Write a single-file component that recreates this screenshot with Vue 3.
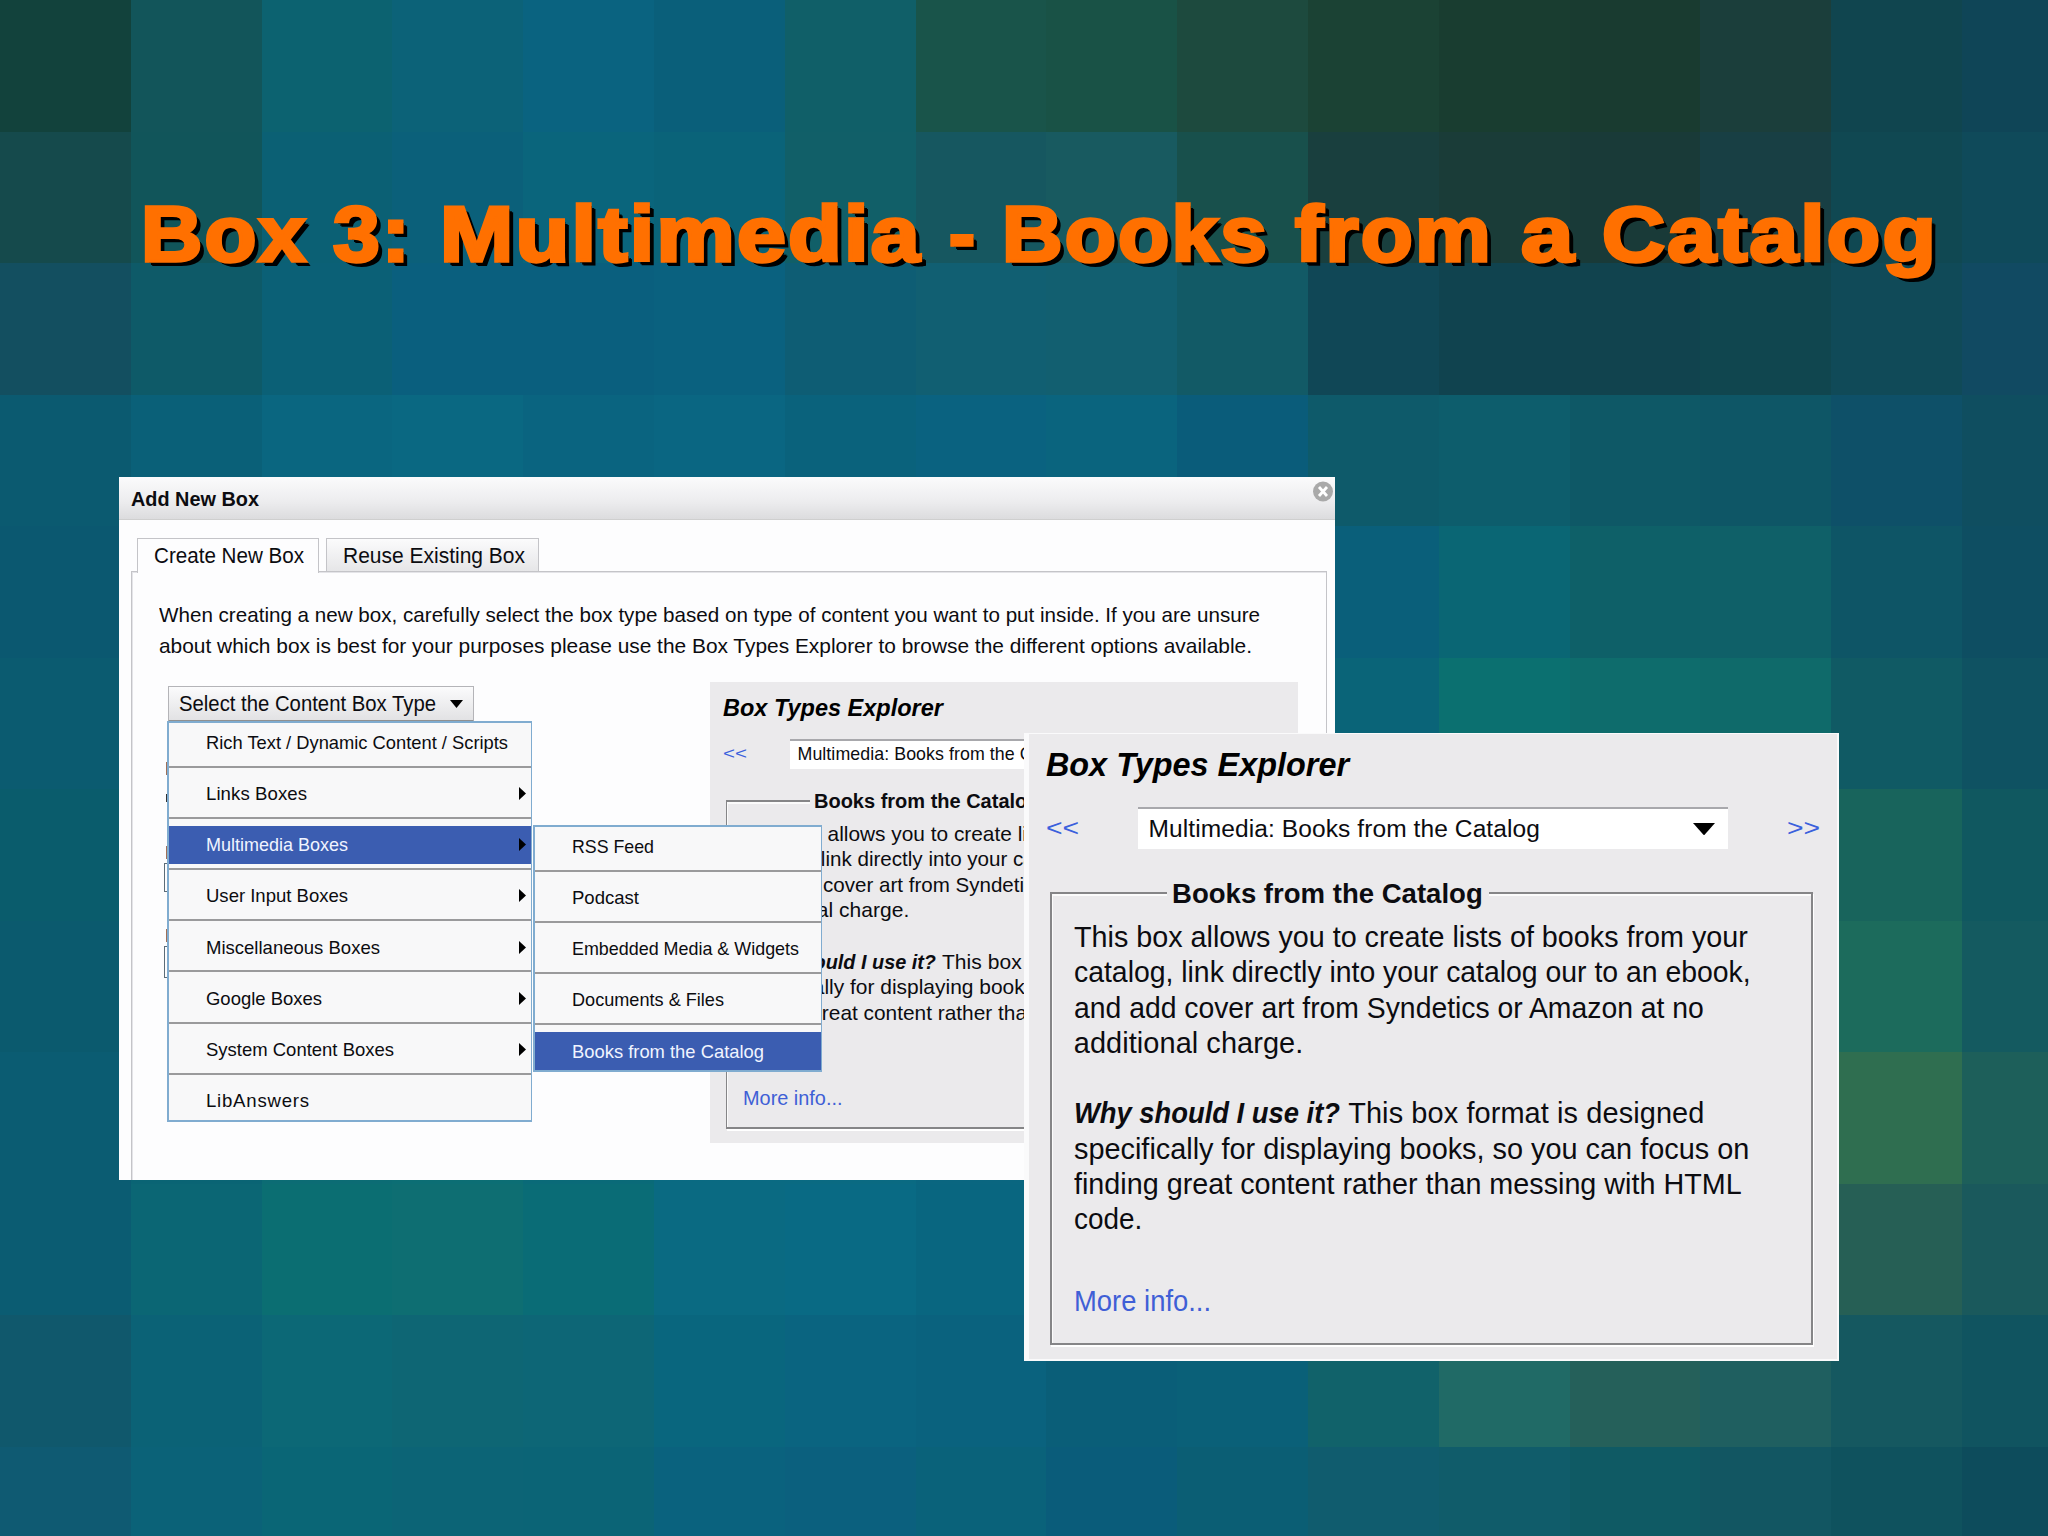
<script setup>
// Background mosaic, row by row
const mosaic = [
  '12423c 12555a 0c6270 0c6278 0a6380 0a5f7a 105f68 19544a 195246 1d4a3e 1b4234 193d30 193b30 1b3e3b 10454f 0f4557',
  '154a4c 11555a 0b6074 0b607a 0a657c 0a6379 115f68 165760 185a60 18504c 193f3e 1a3c38 193a38 183f44 104852 0f4a5a',
  '134f60 0e5a68 0b6076 0a5f7e 0a5f7e 0a617f 0e5d74 115f72 125f70 125a66 104756 10434f 11434e 10464f 104a58 114a62',
  '0b5a70 0a6078 0a6680 0a6882 0a6480 0a6682 0a627c 0a6280 0a647e 0a5c7a 0e5a6a 0d5d6c 0e5866 0e5666 0e5068 0f4e60',
  '0b5870 0a6078 0a6680 0a6680 0a6680 0a6680 0a6680 0a6680 0a6680 0a607c 0a5f7a 0a6674 0e6068 0f6068 0e5566 0e4e62',
  '0b5b70 0a6078 0a6680 0a6680 0a6680 0a6680 0a6680 0a6680 0a6680 0a6680 0a6478 0b7070 0e6c6c 0f6a6a 105a64 0f5262',
  '0a5c6c 0a6078 0a6680 0a6680 0a6680 0a6680 0a6680 0a6680 0a6680 0a6680 0a6680 0b7070 0e6c6c 146a66 18645c 105860',
  '0b5a6e 0a6078 0a6680 0a6680 0a6680 0a6680 0a6680 0a6680 0a6680 0a6680 0a6680 0b7070 0e6c6c 186a62 1c6b5c 145a60',
  '0b5c72 0a6474 0c6c74 0c6e74 0a6a78 0a6a82 0a6a82 0a6680 0a6680 0a6680 0a6680 0b7070 0e6c6c 286c56 2f6e50 1d5f5a',
  '0b5c72 0b6674 0b6e72 0e6e72 0a6c76 0a6a82 096a84 096680 096680 0a6680 0a6680 0b7070 0e6c6c 246457 265f55 1a595c',
  '10586c 0b6276 0c6876 0e6674 0d6676 09667e 0a6480 0a627e 0a5e78 0a6078 11626a 206a66 25605a 1f5f60 155860 105460',
  '0f5a72 0b6278 0a6676 0c6476 0b6476 0a627e 0b607e 0a627a 0a5c7a 0b5e74 105c6e 105c6a 0f5a64 125662 0f525e 0d4c5c',
].flatMap((row) => row.split(' ').map((c) => '#' + c))

const title = [
  ['Box', 167, 0],
  ['3:', 79, 25],
  ['Multimedia', 482, 28],
  ['-', 28, 27],
  ['Books', 267, 25],
  ['from', 198, 26],
  ['a', 55, 28],
  ['Catalog', 336, 26],
]

const menu = [
  { label: 'Rich Text / Dynamic Content / Scripts', w: 302 },
  { label: 'Links Boxes', w: 101, sub: true },
  { label: 'Multimedia Boxes', w: 142, sub: true, on: true },
  { label: 'User Input Boxes', w: 142, sub: true },
  { label: 'Miscellaneous Boxes', w: 174, sub: true },
  { label: 'Google Boxes', w: 116, sub: true },
  { label: 'System Content Boxes', w: 188, sub: true },
  { label: 'LibAnswers', w: 103 },
]

const submenu = [
  { label: 'RSS Feed', w: 82 },
  { label: 'Podcast', w: 67 },
  { label: 'Embedded Media & Widgets', w: 227 },
  { label: 'Documents & Files', w: 152 },
  { label: 'Books from the Catalog', w: 192, on: true },
]

const explorers = [
  { size: 'small', k: 1 },
  { size: 'large', k: 1.378 },
]

const intro = [
  ['When creating a new box, carefully select the box type based on type of content you want to put inside. If you are unsure', 1101],
  ['about which box is best for your purposes please use the Box Types Explorer to browse the different options available.', 1093],
]

const about = [
  ['This box allows you to create lists of books from your', 489],
  ['catalog, link directly into your catalog our to an ebook,', 491],
  ['and add cover art from Syndetics or Amazon at no', 457],
  ['additional charge.', 166.5],
]

const why = [
  ['specifically for displaying books, so you can focus on', 490],
  ['finding great content rather than messing with HTML', 484.5],
  ['code.', 49.5],
]

// Fits the text to the given width: tracks it out, or scales it when it
// must be narrower or carries the stretch modifier
const vFit = {
  mounted(el, { value, modifiers }) {
    const chars = el.textContent.length
    const natural = el.getBoundingClientRect().width
    if (modifiers.stretch || value < natural) {
      el.style.transform = `scaleX(${value / natural})`
      el.style.marginRight = value - natural + 'px'
    } else {
      const spacing = (value - natural) / (chars - 1)
      el.style.letterSpacing = spacing + 'px'
      el.style.marginRight = -spacing + 'px'
    }
  },
}
</script>

<template>
  <main class="slide">
    <div class="mosaic">
      <i v-for="(c, n) in mosaic" :key="n" :style="{ background: c }"></i>
    </div>

    <h1 class="title">
      <span v-for="([word, w, gap], n) in title" :key="n" class="word" :style="{ width: w + 'px', marginLeft: gap + 'px' }"><span v-fit.stretch="w" class="fit">{{ word }}</span></span>
    </h1>

    <section class="dialog">
      <header class="bar">
        <b v-fit="128" class="fit">Add New Box</b>
        <svg class="close" viewBox="0 0 20 20">
          <circle cx="10" cy="10" r="10" fill="#a9a9a9" />
          <path d="M6 5.5 L14 14.5 M14 5.5 L6 14.5" stroke="#fff" stroke-width="2.8" />
        </svg>
      </header>
      <nav class="tabs">
        <div class="tab active"><span v-fit="150" class="fit">Create New Box</span></div>
        <div class="tab"><span v-fit="182" class="fit">Reuse Existing Box</span></div>
      </nav>
      <div class="panel">
        <p class="intro">
          <span v-for="[line, w] in intro" :key="line" class="row"><span v-fit="w" class="fit">{{ line }}</span></span>
        </p>
        <div class="chooser">
          <button class="select-type">
            <span v-fit="257" class="fit">Select the Content Box Type</span>
            <svg width="13" height="8" viewBox="0 0 13 8"><path d="M0 0H13L6.5 8Z" /></svg>
          </button>
          <div class="hidden-form">
            <i class="mark m1"></i><i class="mark m2"></i><i class="mark m3"></i>
            <i class="field f1"></i><i class="mark m4"></i><i class="field f2"></i>
          </div>
          <ul class="menu main-menu">
            <li v-for="item in menu" :key="item.label">
              <div class="band" :class="{ on: item.on }">
                <span v-fit="item.w" class="fit">{{ item.label }}</span>
                <svg v-if="item.sub" width="7" height="13" viewBox="0 0 7 13"><path d="M0 0L7 6.5L0 13Z" /></svg>
              </div>
            </li>
          </ul>
          <ul class="menu sub-menu">
            <li v-for="item in submenu" :key="item.label">
              <div class="band" :class="{ on: item.on }">
                <span v-fit="item.w" class="fit">{{ item.label }}</span>
              </div>
            </li>
          </ul>
        </div>
      </div>
    </section>

    <section v-for="{ size, k } in explorers" :key="size" class="explorer" :class="size">
      <div class="inner">
        <h2><span v-fit="220 * k" class="fit">Box Types Explorer</span></h2>
        <div class="picker">
          <a class="step"><span v-fit.stretch="24 * k" class="fit">&lt;&lt;</span></a>
          <div class="combo">
            <span v-fit="284 * k" class="fit">Multimedia: Books from the Catalog</span>
            <svg viewBox="0 0 16 9"><path d="M0 0H16L8 9Z" /></svg>
          </div>
          <a class="step"><span v-fit.stretch="24 * k" class="fit">&gt;&gt;</span></a>
        </div>
        <fieldset>
          <legend><span v-fit="225.5 * k" class="fit">Books from the Catalog</span></legend>
          <div class="copy">
            <span v-for="[line, w] in about" :key="line" class="row"><span v-fit="w * k" class="fit">{{ line }}</span></span>
            <span class="row">&nbsp;</span>
            <span class="row why"><b v-fit="193 * k" class="fit">Why should I use it?</b><span v-fit="258.5 * k" class="fit">This box format is designed</span></span>
            <span v-for="[line, w] in why" :key="line" class="row"><span v-fit="w * k" class="fit">{{ line }}</span></span>
          </div>
          <a class="more"><span v-fit="99.5 * k" class="fit">More info...</span></a>
        </fieldset>
      </div>
    </section>
  </main>
</template>

<style>
body { background: #0a6680; }
</style>

<style scoped>
.slide {
  position: relative;
  width: 2048px;
  height: 1536px;
  overflow: hidden;
  font-family: "Liberation Sans", Arial, sans-serif;
  color: #0c0c10;
}
.fit { display: inline-block; white-space: pre; transform-origin: 0 50%; }
.row { display: block; white-space: nowrap; }

.mosaic {
  position: absolute;
  inset: 0;
  display: grid;
  grid-template-columns: repeat(16, 130.8px);
  grid-template-rows: repeat(12, 131.5px);
}

.title {
  position: absolute;
  left: 141px;
  top: 184px;
  margin: 0;
  display: flex;
  font: 700 78px/100px "Liberation Sans", Arial, sans-serif;
  letter-spacing: 2px;
  color: #ff7000;
  -webkit-text-stroke: 3.4px #ff7000;
  text-shadow: 2px 2px 0 #000, 4px 4px 0 #000, 5px 5px 0 #000;
}
.word { flex: none; white-space: nowrap; }

.dialog {
  position: absolute;
  left: 119px;
  top: 477px;
  width: 1216px;
  height: 703px;
  background: #fdfdfe;
}
.bar {
  display: flex;
  justify-content: space-between;
  height: 43px;
  box-sizing: border-box;
  border-bottom: 1px solid #cfcfcf;
  padding: 0 2px 0 12px;
  background: linear-gradient(#fbfbfc, #ececee 60%, #dcdcde);
  font-size: 21px;
  line-height: 43px;
}
.close { width: 20px; height: 21px; margin-top: 4px; }
.tabs {
  display: flex;
  gap: 7px;
  margin: 18px 0 0 18px;
  height: 33px;
}
.tab {
  box-sizing: border-box;
  height: 33px;
  border: 1px solid #c4c4c8;
  border-bottom: 0;
  padding: 0 14px 0 16px;
  width: 213px;
  font-size: 21.3px;
  line-height: 34px;
  background: linear-gradient(#fbfbfc, #e6e6e8);
}
.tab.active {
  position: relative;
  z-index: 1;
  width: 182px;
  height: 35px;
  background: #fdfdfe;
}
.panel {
  box-sizing: border-box;
  width: 1196px;
  height: 609px;
  margin-left: 12px;
  border: 1px solid #c4c4c8;
  border-bottom: 0;
  box-shadow: inset 1px 1px 0 #e4e4e8;
  padding: 28px 0 0 27px;
}
.intro { margin: 0; font-size: 21px; line-height: 30.7px; }
.chooser { position: relative; padding: 25px 0 0 9px; }
.select-type {
  box-sizing: border-box;
  display: flex;
  align-items: center;
  justify-content: space-between;
  width: 306px;
  height: 36px;
  border: 1px solid #b4b4b8;
  border-bottom: 2px solid #909090;
  padding: 0 10px;
  font: 21.3px/34px "Liberation Sans", Arial, sans-serif;
  color: inherit;
  background: linear-gradient(#fbfbfc, #e2e2e4);
}
.hidden-form { position: absolute; left: 5px; top: 61px; width: 4px; }
.mark, .field { display: block; box-sizing: border-box; }
.mark { width: 2px; height: 13px; margin-left: 2px; background: #a07058; }
.m1 { margin-top: 40px; }
.m2 { margin-top: 19px; height: 8px; background: #333; }
.m3 { margin-top: 44px; }
.m4 { margin-top: 37px; }
.field { width: 5px; height: 29px; margin-top: 4px; border: 1px solid #5c6c78; border-right: 0; }
.f2 { height: 32px; }

.menu {
  position: absolute;
  z-index: 3;
  box-sizing: border-box;
  margin: 0;
  padding: 0;
  list-style: none;
  font-size: 18.6px;
  background: #f8f8f9;
  border: 2px solid #80acd0;
  border-width: 2px 1px 2px 2px;
}
.main-menu { left: 8px; top: 60px; width: 365px; }
.sub-menu { left: 374px; top: 164px; width: 289px; }
.menu li { padding: 7px 0 4.2px; border-bottom: 2px solid #9a9a9c; }
.menu li:first-child { padding-top: 0; }
.menu li:last-child { padding-bottom: 0; border-bottom: 0; }
.band {
  display: flex;
  align-items: center;
  justify-content: space-between;
  height: 38px;
  padding: 0 5px 0 37px;
  line-height: 39px;
}
.band.on { background: #3b5db1; color: #f0f4ff; }
.band.on svg { fill: #000; }

.explorer { position: absolute; box-sizing: border-box; overflow: hidden; background: #ebeaec; }
.small { left: 710px; top: 682px; width: 588px; height: 461px; font-size: 10px; z-index: 1; }
.large {
  left: 1024px;
  top: 733px;
  width: 815px;
  height: 628px;
  font-size: 13.78px;
  z-index: 4;
  border: solid #fafafb;
  border-width: 1px 2px 2px 5px;
}
.large .inner { margin: -5px 0 0 -1px; }
.inner { padding: 1.13em 0 0 1.3em; }
h2 { margin: 0; font-size: 2.35em; line-height: 1.277em; font-style: italic; color: #000; }
.picker { display: flex; align-items: center; margin-top: 1.54em; height: 3.05em; }
.step { flex: none; width: 6.7em; color: #3a60dc; }
.step .fit { font-size: 1.7em; }
.combo {
  flex: none;
  display: flex;
  align-items: center;
  justify-content: space-between;
  box-sizing: border-box;
  width: 42.8em;
  height: 3.05em;
  border-top: 2px solid #a8a8ac;
  padding: 0 .95em 0 .75em;
  background: #fff;
}
.combo .fit { font-size: 1.78em; line-height: 1.6em; margin-top: -.03em; }
.combo svg { width: 1.6em; height: .9em; }
.combo + .step { margin-left: 4.3em; }
fieldset {
  box-sizing: border-box;
  width: 55.4em;
  height: 34em;
  margin: 1.95em 0 0 .3em;
  border: solid #858587;
  border-width: 2px 1px 2px 1px;
  box-shadow: 1px 2px 0 #fff, inset 1px 2px 0 #fbfbfb;
  padding: .7em 0 0 1.58em;
}
.large fieldset { border-width: 2px; }
legend {
  margin-left: 6.76em;
  padding: 0 .4em;
  background: #ebeaec;
  line-height: 2.5em;
  height: 2.5em;
}
legend .fit { font-size: 2.07em; line-height: 1.2em; font-weight: bold; vertical-align: top; }
.copy .row { height: 2.56em; line-height: 2.56em; }
.copy .fit { font-size: 2.1em; line-height: 1.219em; vertical-align: top; }
.why .fit + .fit { margin-left: .29em; }
.why b { font-style: italic; }
.more { display: block; margin-top: 3.35em; line-height: 2.56em; color: #3f5fd6; }
.more .fit { font-size: 2.1em; line-height: 1.219em; vertical-align: top; }
</style>
